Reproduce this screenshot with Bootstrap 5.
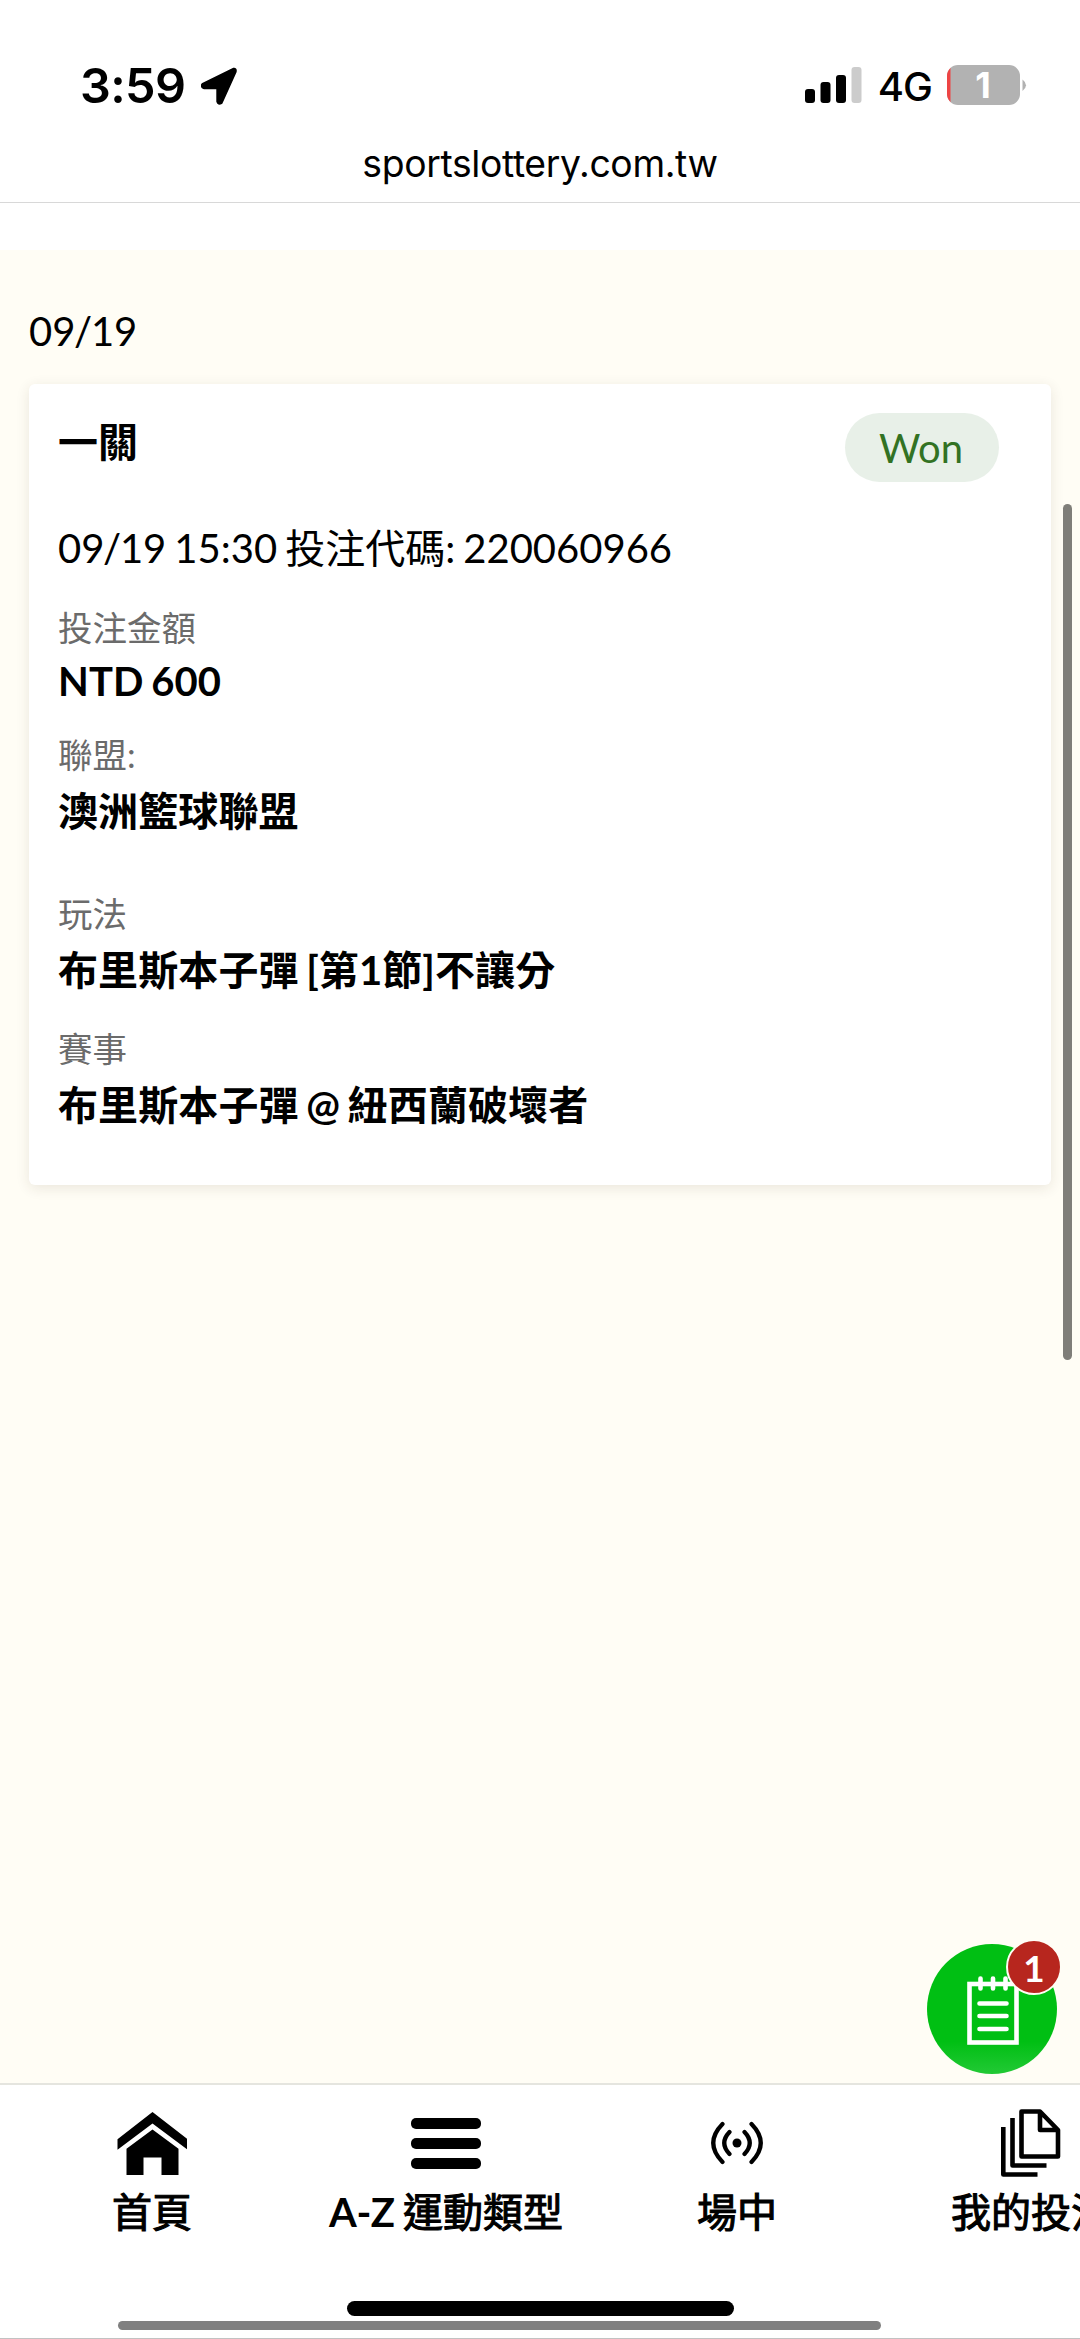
<!DOCTYPE html>
<html lang="zh-Hant">
<head>
<meta charset="utf-8">
<meta name="viewport" content="width=device-width, initial-scale=1">
<title>sportslottery.com.tw</title>
<link href="https://cdn.jsdelivr.net/npm/bootstrap@5.3.0/dist/css/bootstrap.min.css" rel="stylesheet">
<style>
html,body{height:100%}
body{font-family:Lato,"Noto Sans CJK TC",sans-serif;font-size:40px;line-height:48px;color:#000;background:#fff;overflow:hidden}
svg{display:block;flex:none}
.screen{height:2339px;width:1080px}
.ios{font-family:Inter,sans-serif}
.top-area{height:203px;border-bottom:1px solid #d8d8d8}
.status{height:137px;padding:65px 53px 0 80px}
.clock{font-size:48.5px;font-weight:600;line-height:42px;letter-spacing:-.6px}
.net{font-size:40px;font-weight:500;line-height:43px;letter-spacing:-1px;margin:0 15px 0 16px}
.batt-num{font-size:36px;font-weight:700}
.url{font-size:37.3px;line-height:53px;letter-spacing:-.35px}
.page-gap{height:47px}
.page-body{background:#fffdf5;padding:55px 29px 0;word-spacing:-2.2px}
.day{margin-bottom:26px;line-height:53px}
.sep{margin:0 -1.3px}
.bet{border:0;border-radius:6px;height:801px;padding:29px 52px 0 29px;box-shadow:0 3px 14px rgba(60,50,30,.11)}
.bet-head{height:69px;margin-bottom:42px}
.bet-title{padding-top:5px}
.pill-won{width:154px;height:69px;background:#e8f0e8;color:#327223;line-height:71px;font-size:40px;padding-right:2px}
.val{font-weight:700;letter-spacing:.1px}
.lbl{font-size:34.5px;line-height:42px;color:#6b6b6b}
.mt-a{margin-top:35px}.mt-b{margin-top:29px}.mt-c{margin-top:58px}.mt-d{margin-top:34px}
.gap-v{margin-top:11px}.gap-s{margin-top:8px}
.scroll-y{right:8px;top:504px;width:9px;height:856px;background:#7f7e79}
.fab{left:927px;top:1944px;width:130px;height:130px;background:linear-gradient(#00bf13 75%,#22c935)}
.fab svg{margin:32px 0 0 40px}
.fab-count{left:79px;top:-5px;width:56px;height:56px;background:#b7261e;border:2px solid #fffdf5;color:#fff;font-size:37px;line-height:53px}
.tabs{height:256px;border-top:2px solid #e5e5df;overflow:hidden}
.tab-row{height:216px}
.tab{width:260px;padding-top:23px;flex:none}
.tab .pic{height:70px;margin-bottom:10px}
.tab-lbl{white-space:nowrap;line-height:48px;word-spacing:-2px;-webkit-text-stroke:1.1px #000}
.tab-lbl b{-webkit-text-stroke:0;letter-spacing:-.4px}
.home-bar{width:387px;height:15px;background:#000;margin-left:347px}
.scroll-x{width:763px;height:9px;background:#808080;margin:5px 0 8px 118px}
.end-line{height:1px;background:#c2c2c2}
</style>
</head>
<body>
<div class="screen position-relative d-flex flex-column overflow-hidden">
  <header class="top-area ios flex-shrink-0">
    <div class="status d-flex justify-content-between">
      <div class="d-flex">
        <span class="clock">3:59</span>
        <svg class="ms-3" width="38" height="41" viewBox="1 0 38 41"><path d="M3 19.500 33.500 4.500Q35.500 4 35 6.500L21 37.500Q18.500 39 18 36.500V22.500H4Q1.500 21.500 3 19.500Z" stroke="#000" stroke-width="3.400" stroke-linejoin="round"/></svg>
      </div>
      <div class="d-flex">
        <svg width="57" height="41" viewBox="0 0 57 41"><rect y="24" width="10" height="14" rx="3"/><rect x="15.500" y="17" width="10" height="21" rx="3"/><rect x="31" y="10" width="10" height="28" rx="3"/><rect x="46.500" y="2" width="10" height="36" rx="3" fill="#ccc"/></svg>
        <span class="net">4G</span>
        <svg width="80" height="41" viewBox="0 0 80 41"><clipPath id="bc"><rect width="73" height="40" rx="11"/></clipPath><g clip-path="url(#bc)"><rect width="73" height="40" fill="#b2b2b2"/><rect width="3.500" height="40" fill="#ee4444"/></g><path d="M75.500 14.500q7 5.500 0 11.500z" fill="#b2b2b2"/><text class="batt-num" x="36" y="33" fill="#fff" text-anchor="middle">1</text></svg>
      </div>
    </div>
    <div class="url text-center">sportslottery.com.tw</div>
  </header>
  <div class="page-gap flex-shrink-0"></div>
  <main class="page-body flex-grow-1">
    <div class="day">09<span class="sep">/</span>19</div>
    <article class="card bet">
      <div class="bet-head d-flex justify-content-between">
        <div class="bet-title fw-bold">一關</div>
        <div class="pill-won rounded-pill text-center">Won</div>
      </div>
      <div>09<span class="sep">/</span>19 15:30 投注代碼: 220060966</div>
      <div class="lbl mt-a">投注金額</div>
      <div class="val gap-s">NTD 600</div>
      <div class="lbl mt-b">聯盟:</div>
      <div class="val gap-v">澳洲籃球聯盟</div>
      <div class="lbl mt-c">玩法</div>
      <div class="val gap-v">布里斯本子彈 [第1節]不讓分</div>
      <div class="lbl mt-d">賽事</div>
      <div class="val gap-v">布里斯本子彈 @ 紐西蘭破壞者</div>
    </article>
  </main>
  <nav class="tabs bg-white flex-shrink-0">
    <div class="tab-row d-flex">
      <div class="tab d-flex flex-column align-items-center" style="margin-left:22px">
        <div class="pic d-flex align-items-center"><svg width="70" height="63" viewBox="0 0 70 63"><path d="M0 31 35 0 70 31V43L35 13 0 43ZM9 42 35 20 61 42V72H44V52H26V72H9Z" transform="translate(.5) scale(1 .875)"/></svg></div>
        <div class="tab-lbl">首頁</div>
      </div>
      <div class="tab d-flex flex-column align-items-center" style="margin-left:34px">
        <div class="pic d-flex align-items-center"><svg width="70" height="51" viewBox="0 0 70 51"><rect width="70" height="11" rx="5"/><rect y="20" width="70" height="11" rx="5"/><rect y="40" width="70" height="11" rx="5"/></svg></div>
        <div class="tab-lbl"><b>A-Z</b> 運動類型</div>
      </div>
      <div class="tab d-flex flex-column align-items-center" style="margin-left:31px">
        <div class="pic d-flex align-items-center"><svg width="54" height="44" viewBox="0 0 54 44" fill="none" stroke="#000" stroke-width="4.200" stroke-linecap="round"><circle cx="27" cy="22" r="4.500" fill="#000" stroke="none"/><path d="M19.500 11Q9 22 19.500 33M34.500 11Q45 22 34.500 33M12.500 3Q-6 22 12.500 41M41.500 3Q60 22 41.500 41"/></svg></div>
        <div class="tab-lbl">場中</div>
      </div>
      <div class="tab d-flex flex-column align-items-center" style="margin-left:34px">
        <div class="pic d-flex align-items-center"><svg width="60" height="68" viewBox="0 0 60 68" fill="none" stroke="#000" stroke-width="4.600" stroke-linejoin="round"><path d="M2.300 18V65.500H36.500M11.500 9V56.500H45.500M20.500 2.500H39L57 21V47.500H20.500ZM39 2.500V21H57"/></svg></div>
        <div class="tab-lbl">我的投注</div>
      </div>
    </div>
    <div class="home-bar rounded-pill"></div>
    <div class="scroll-x rounded-pill"></div>
    <div class="end-line"></div>
  </nav>
  <div class="scroll-y position-absolute rounded-pill"></div>
  <div class="fab position-absolute rounded-circle">
    <svg width="52" height="70" viewBox="0 0 52 70" fill="none" stroke="#fff" stroke-width="4.600"><rect x="2.500" y="8" width="47" height="58.500"/><path d="M13.500 2.500V12.500M26 2.500V12.500M38.500 2.500V12.500M12.500 27.500H39.500M12.500 40H39.500M12.500 53H39.500" stroke-linecap="round"/></svg>
    <div class="fab-count position-absolute rounded-circle text-center fw-bold">1</div>
  </div>
</div>
<script src="https://cdn.jsdelivr.net/npm/bootstrap@5.3.0/dist/js/bootstrap.bundle.min.js"></script>
</body>
</html>
